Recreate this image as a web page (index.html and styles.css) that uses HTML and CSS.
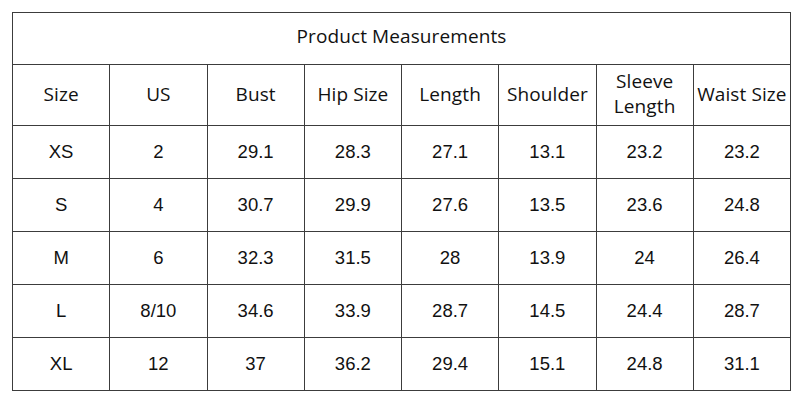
FILE: index.html
```html
<!DOCTYPE html>
<html>
<head>
<meta charset="utf-8">
<link rel="stylesheet" href="styles.css">
</head>
<body>
<table class="chart">
  <colgroup>
    <col><col><col><col><col><col><col><col>
  </colgroup>
  <thead>
    <tr class="title-row"><th colspan="8">Product Measurements</th></tr>
    <tr class="head-row">
      <th>Size</th><th>US</th><th>Bust</th><th>Hip Size</th><th>Length</th><th>Shoulder</th><th>Sleeve<br>Length</th><th>Waist Size</th>
    </tr>
  </thead>
  <tbody>
    <tr><td>XS</td><td>2</td><td>29.1</td><td>28.3</td><td>27.1</td><td>13.1</td><td>23.2</td><td>23.2</td></tr>
    <tr><td>S</td><td>4</td><td>30.7</td><td>29.9</td><td>27.6</td><td>13.5</td><td>23.6</td><td>24.8</td></tr>
    <tr><td>M</td><td>6</td><td>32.3</td><td>31.5</td><td>28</td><td>13.9</td><td>24</td><td>26.4</td></tr>
    <tr><td>L</td><td>8/10</td><td>34.6</td><td>33.9</td><td>28.7</td><td>14.5</td><td>24.4</td><td>28.7</td></tr>
    <tr><td>XL</td><td>12</td><td>37</td><td>36.2</td><td>29.4</td><td>15.1</td><td>24.8</td><td>31.1</td></tr>
  </tbody>
</table>
</body>
</html>
```
FILE: styles.css
```css
html, body {
  margin: 0;
  padding: 0;
  background: #ffffff;
}

body {
  padding: 12px 0 0 12px;
}

.chart {
  border-collapse: collapse;
  table-layout: fixed;
  width: 779px;
  color: #111;
}

.chart col {
  width: 97.25px;
}

.chart th,
.chart td {
  border: 1px solid #3c3c3c;
  text-align: center;
  vertical-align: middle;
  padding: 0;
}

.chart th {
  font-family: "Open Sans", "Noto Sans", sans-serif;
  font-weight: 400;
  font-size: 19px;
  line-height: 25px;
  letter-spacing: 0.1px;
}

.title-row th {
  height: 47px;
  padding-bottom: 4px;
}

.head-row th {
  height: 58px;
  padding-bottom: 2px;
}

.chart td {
  font-family: "Liberation Sans", Arial, sans-serif;
  font-size: 18.5px;
  height: 52px;
}
```
